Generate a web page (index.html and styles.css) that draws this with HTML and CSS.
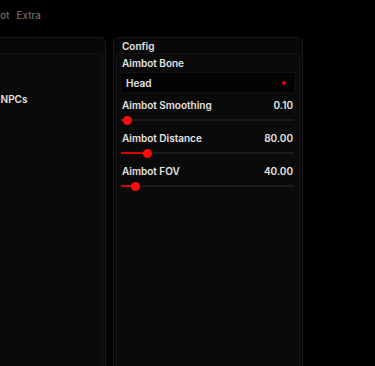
FILE: index.html
```html
<!DOCTYPE html>
<html lang="en">
<head>
  <meta charset="UTF-8" />
  <meta name="viewport" content="width=device-width, initial-scale=1.0" />
  <title>Menu</title>
  <link rel="stylesheet" href="styles.css">
</head>
<body>
  <div class="app">
    <nav class="tabs">
      <span class="tab">Aimbot</span>
      <span class="tab">Extra</span>
    </nav>
    <div class="columns">
      <section class="panel panel-left">
        <div class="panel-head">Targets</div>
        <div class="panel-body">
          <div class="check-row">Target NPCs</div>
        </div>
      </section>
      <section class="panel panel-right">
        <div class="panel-head">Config</div>
        <div class="panel-body">
          <div class="field">
            <span class="field-label">Aimbot Bone</span>
            <div class="select">
              <span>Head</span>
              <span class="select-dot"></span>
            </div>
          </div>
          <div class="field">
            <div class="field-top"><span>Aimbot Smoothing</span><span>0.10</span></div>
            <div class="slider"><div class="slider-fill" style="--p: 0.013"></div></div>
          </div>
          <div class="field">
            <div class="field-top"><span>Aimbot Distance</span><span>80.00</span></div>
            <div class="slider"><div class="slider-fill" style="--p: 0.133"></div></div>
          </div>
          <div class="field">
            <div class="field-top"><span>Aimbot FOV</span><span>40.00</span></div>
            <div class="slider"><div class="slider-fill" style="--p: 0.062"></div></div>
          </div>
        </div>
      </section>
    </div>
  </div>
</body>
</html>
```

FILE: styles.css
```css
body {
  margin: 0;
  background: #000;
  color: #e4e4e4;
  font-family: 'Inter', 'Liberation Sans', sans-serif;
  height: 366px;
  overflow: hidden;
}
.app {
  padding-top: 7px;
}
.tabs {
  display: flex;
  gap: 7px;
  margin-left: -24px;
  height: 16px;
  align-items: center;
}
.tab {
  font-size: 10px;
  color: #7d7d7d;
}
.columns {
  display: flex;
  gap: 7px;
  margin-top: 14px;
  margin-left: -47px;
}
.panel {
  background: #080808;
  border: 1px solid #181818;
  border-radius: 5px;
  height: 360px;
  box-sizing: border-box;
  display: flex;
  flex-direction: column;
}
.panel-left {
  width: 153px;
}
.panel-right {
  width: 190px;
}
.panel-head {
  height: 15px;
  padding: 0 8px;
  display: flex;
  align-items: center;
  font-size: 10px;
  font-weight: 600;
}
.panel-body {
  flex: 1;
  margin: 0 2px;
  border: 1px solid #141414;
  border-radius: 4px;
  background: #0a0a0a;
  padding: 3px 3px 0 3px;
}
.panel-left .panel-body {
  padding: 39px 10px 0;
}
.check-row {
  font-size: 10px;
  font-weight: 600;
}
.field {
  display: flex;
  flex-direction: column;
  margin-bottom: 6px;
}
.field-label,
.field-top {
  font-size: 10px;
  font-weight: 600;
  line-height: 13px;
  padding: 0 3px 0 2px;
}
.field-top {
  display: flex;
  justify-content: space-between;
}
.select {
  margin-top: 2px;
  height: 21px;
  box-sizing: border-box;
  background: #030303;
  border: 1px solid #111;
  border-radius: 2px;
  display: flex;
  align-items: center;
  justify-content: space-between;
  padding: 0 9px 0 5px;
  font-size: 10px;
  font-weight: 600;
}
.select-dot {
  width: 4px;
  height: 4px;
  border-radius: 50%;
  background: #ee0000;
}
.slider {
  margin: 7px 2px 5px 1px;
  height: 2px;
  background: #1b1b1b;
  position: relative;
}
.slider-fill {
  height: 2px;
  width: calc(4.5px + var(--p) * (100% - 9px));
  background: #d40000;
  position: relative;
}
.slider-fill::after {
  content: '';
  position: absolute;
  right: -4.5px;
  top: -3.5px;
  width: 9px;
  height: 9px;
  border-radius: 50%;
  background: #ff0a0a;
}
```
